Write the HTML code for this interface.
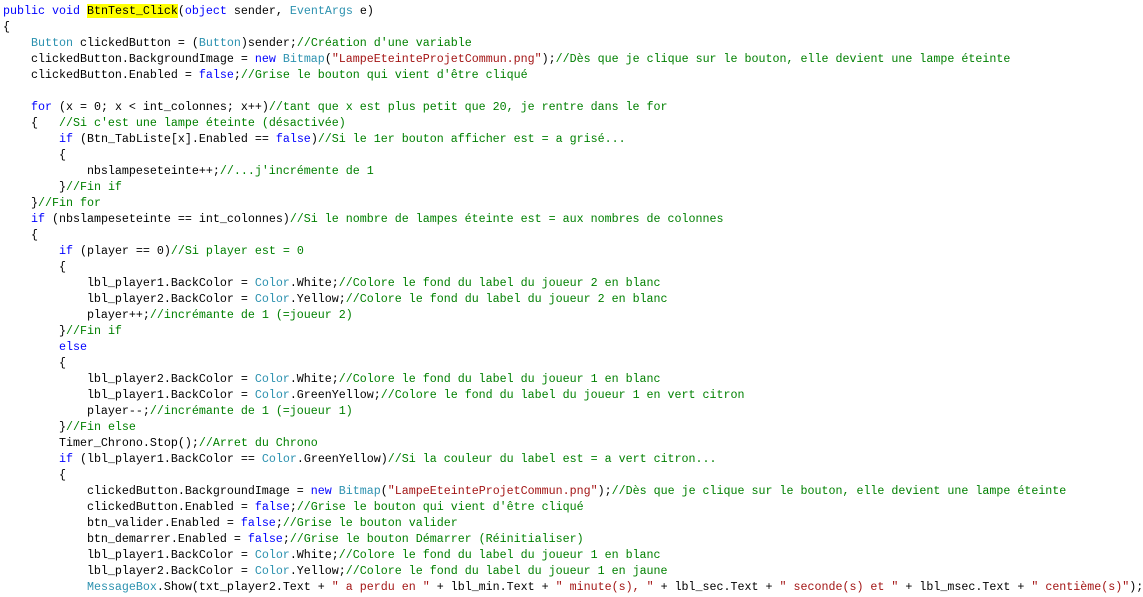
<!DOCTYPE html>
<html><head><meta charset="utf-8"><style>
html,body{margin:0;padding:0;background:#fff;width:1143px;height:597px;overflow:hidden}
pre{margin:0;padding:3px 0 0 3px;font-family:"Liberation Mono",monospace;font-size:11.67px;line-height:16px;color:#000}
.k{color:#0000ff}.t{color:#2b91af}.c{color:#008000}.s{color:#a31515}.h{background:#ffff00}
</style></head><body><pre><span class="k">public</span> <span class="k">void</span> <span class="h">BtnTest_Click</span>(<span class="k">object</span> sender, <span class="t">EventArgs</span> e)
{
    <span class="t">Button</span> clickedButton = (<span class="t">Button</span>)sender;<span class="c">//Création d'une variable</span>
    clickedButton.BackgroundImage = <span class="k">new</span> <span class="t">Bitmap</span>(<span class="s">"LampeEteinteProjetCommun.png"</span>);<span class="c">//Dès que je clique sur le bouton, elle devient une lampe éteinte</span>
    clickedButton.Enabled = <span class="k">false</span>;<span class="c">//Grise le bouton qui vient d'être cliqué</span>

    <span class="k">for</span> (x = 0; x &lt; int_colonnes; x++)<span class="c">//tant que x est plus petit que 20, je rentre dans le for</span>
    {   <span class="c">//Si c'est une lampe éteinte (désactivée)</span>
        <span class="k">if</span> (Btn_TabListe[x].Enabled == <span class="k">false</span>)<span class="c">//Si le 1er bouton afficher est = a grisé...</span>
        {
            nbslampeseteinte++;<span class="c">//...j'incrémente de 1</span>
        }<span class="c">//Fin if</span>
    }<span class="c">//Fin for</span>
    <span class="k">if</span> (nbslampeseteinte == int_colonnes)<span class="c">//Si le nombre de lampes éteinte est = aux nombres de colonnes</span>
    {
        <span class="k">if</span> (player == 0)<span class="c">//Si player est = 0</span>
        {
            lbl_player1.BackColor = <span class="t">Color</span>.White;<span class="c">//Colore le fond du label du joueur 2 en blanc</span>
            lbl_player2.BackColor = <span class="t">Color</span>.Yellow;<span class="c">//Colore le fond du label du joueur 2 en blanc</span>
            player++;<span class="c">//incrémante de 1 (=joueur 2)</span>
        }<span class="c">//Fin if</span>
        <span class="k">else</span>
        {
            lbl_player2.BackColor = <span class="t">Color</span>.White;<span class="c">//Colore le fond du label du joueur 1 en blanc</span>
            lbl_player1.BackColor = <span class="t">Color</span>.GreenYellow;<span class="c">//Colore le fond du label du joueur 1 en vert citron</span>
            player--;<span class="c">//incrémante de 1 (=joueur 1)</span>
        }<span class="c">//Fin else</span>
        Timer_Chrono.Stop();<span class="c">//Arret du Chrono</span>
        <span class="k">if</span> (lbl_player1.BackColor == <span class="t">Color</span>.GreenYellow)<span class="c">//Si la couleur du label est = a vert citron...</span>
        {
            clickedButton.BackgroundImage = <span class="k">new</span> <span class="t">Bitmap</span>(<span class="s">"LampeEteinteProjetCommun.png"</span>);<span class="c">//Dès que je clique sur le bouton, elle devient une lampe éteinte</span>
            clickedButton.Enabled = <span class="k">false</span>;<span class="c">//Grise le bouton qui vient d'être cliqué</span>
            btn_valider.Enabled = <span class="k">false</span>;<span class="c">//Grise le bouton valider</span>
            btn_demarrer.Enabled = <span class="k">false</span>;<span class="c">//Grise le bouton Démarrer (Réinitialiser)</span>
            lbl_player1.BackColor = <span class="t">Color</span>.White;<span class="c">//Colore le fond du label du joueur 1 en blanc</span>
            lbl_player2.BackColor = <span class="t">Color</span>.Yellow;<span class="c">//Colore le fond du label du joueur 1 en jaune</span>
            <span class="t">MessageBox</span>.Show(txt_player2.Text + <span class="s">" a perdu en "</span> + lbl_min.Text + <span class="s">" minute(s), "</span> + lbl_sec.Text + <span class="s">" seconde(s) et "</span> + lbl_msec.Text + <span class="s">" centième(s)"</span>);
</pre></body></html>
